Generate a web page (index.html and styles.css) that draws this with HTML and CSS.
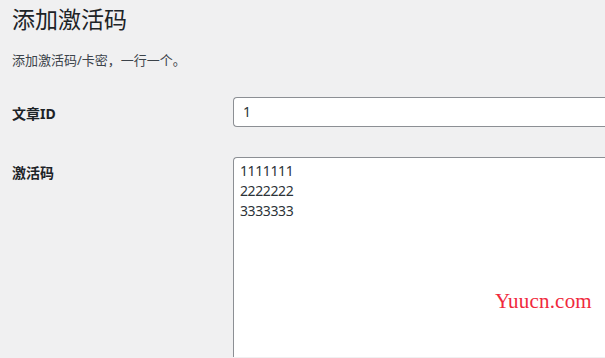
FILE: index.html
```html
<!DOCTYPE html>
<html lang="zh-CN">
<head>
<meta charset="utf-8">
<link rel="stylesheet" href="styles.css">
</head>
<body>
<div class="wrap">
  <h1 class="title">添加激活码</h1>
  <p class="desc">添加激活码/卡密，一行一个。</p>
  <div class="form">
    <div class="row">
      <div class="label">文章ID</div>
      <div class="field"><div class="input">1</div></div>
    </div>
    <div class="row">
      <div class="label label-ta">激活码</div>
      <div class="field"><div class="textarea">1111111<br>2222222<br>3333333</div></div>
    </div>
  </div>
  <div class="watermark">Yuucn.com</div>
</div>
</body>
</html>
```
FILE: styles.css
```css
html, body {
  margin: 0;
  padding: 0;
  background: #f0f0f1;
  overflow: hidden;
}
body {
  width: 605px;
  height: 358px;
  font-family: "Segoe UI", "Noto Sans", "Noto Sans CJK SC", sans-serif;
  color: #3c434a;
}
.wrap {
  position: relative;
  padding-left: 12px;
  height: 358px;
}
.title {
  margin: 0;
  padding: 4px 0 0;
  font-size: 23px;
  font-weight: 400;
  line-height: 30px;
  color: #1d2327;
}
.desc {
  margin: 16px 0 0;
  font-size: 13px;
  line-height: 20px;
}
.form {
  margin-top: 27px;
}
.row {
  display: flex;
}
.label {
  width: 221px;
  flex: none;
  font-size: 14px;
  font-weight: 700;
  color: #1d2327;
  line-height: 20px;
  padding-top: 7px;
}
.field {
  flex: 1;
}
.input {
  height: 28px;
  border: 1px solid #8c8f94;
  border-radius: 4px;
  border-right: none;
  border-top-right-radius: 0;
  border-bottom-right-radius: 0;
  background: #fff;
  padding-left: 9px;
  font-size: 14px;
  line-height: 28px;
  color: #2c3338;
  margin-bottom: 30px;
}
.label-ta {
  padding-top: 6px;
}
.textarea {
  height: 196px;
  border: 1px solid #8c8f94;
  border-right: none;
  border-bottom: none;
  border-radius: 4px 0 0 0;
  background: #fff;
  padding: 3px 0 0 6px;
  font-size: 14px;
  line-height: 20px;
  letter-spacing: -0.4px;
  color: #2c3338;
}
.watermark {
  position: absolute;
  left: 495px;
  top: 291px;
  font-family: "Liberation Serif", "DejaVu Serif", serif;
  font-size: 21px;
  line-height: 20px;
  color: #f0283c;
  letter-spacing: 0.2px;
}
```
